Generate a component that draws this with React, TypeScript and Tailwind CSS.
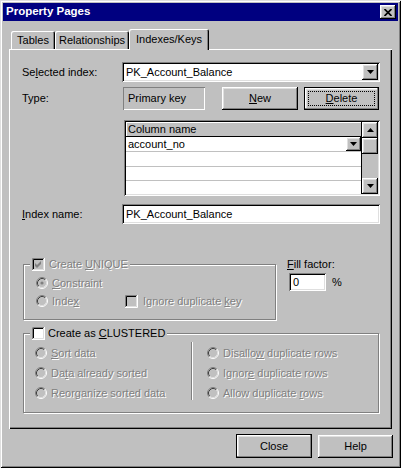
import React from "react";

const raised =
  "shadow-[inset_-1px_-1px_#000,inset_1px_1px_#fff,inset_-2px_-2px_#808080,inset_2px_2px_#dfdfdf]";
const raisedDefault =
  "border border-black shadow-[inset_-1px_-1px_#808080,inset_1px_1px_#fff,inset_2px_2px_#dfdfdf]";
const sunken =
  "shadow-[inset_1px_1px_#808080,inset_-1px_-1px_#fff,inset_2px_2px_#000,inset_-2px_-2px_#dfdfdf]";
const etched = "border border-[#808080] shadow-[inset_1px_1px_#fff,1px_1px_#fff]";
const dim = "text-[#808080] [text-shadow:1px_1px_0_#fff]";

const Arrow = ({ up = false }: { up?: boolean }) => (
  <svg width="7" height="4" viewBox="0 0 7 4">
    <polygon points={up ? "3.5,0 7,4 0,4" : "0,0 7,0 3.5,4"} fill="#000" />
  </svg>
);

const DropButton = ({ w = 16, h = 16 }: { w?: number; h?: number }) => (
  <div
    className={`${raised} bg-[#c0c0c0] flex items-center justify-center shrink-0`}
    style={{ width: w, height: h }}
  >
    <Arrow />
  </div>
);

const Radio = ({ checked = false }: { checked?: boolean }) => (
  <svg width="12" height="12" viewBox="0 0 12 12" className="shrink-0">
    <circle cx="6" cy="6" r="4.5" fill="#c0c0c0" />
    <path d="M2.11 9.89 A5.5 5.5 0 0 1 9.89 2.11" fill="none" stroke="#808080" />
    <path d="M9.89 2.11 A5.5 5.5 0 0 1 2.11 9.89" fill="none" stroke="#fff" />
    <path d="M2.82 9.18 A4.5 4.5 0 0 1 9.18 2.82" fill="none" stroke="#404040" />
    <path d="M9.18 2.82 A4.5 4.5 0 0 1 2.82 9.18" fill="none" stroke="#dfdfdf" />
    {checked && <circle cx="6" cy="6" r="1.6" fill="#808080" />}
  </svg>
);

const Check = ({ checked = false, disabled = false }: { checked?: boolean; disabled?: boolean }) => (
  <svg width="13" height="13" viewBox="0 0 13 13" className="shrink-0">
    <rect x="0" y="0" width="13" height="13" fill={disabled ? "#c0c0c0" : "#fff"} />
    <path d="M0.5 12 V0.5 H12" fill="none" stroke="#808080" />
    <path d="M1.5 11 V1.5 H11" fill="none" stroke="#000" />
    <path d="M0 12.5 H12.5 V0" fill="none" stroke="#fff" />
    <path d="M1 11.5 H11.5 V1" fill="none" stroke="#dfdfdf" />
    {checked && (
      <path d="M3 5 L5 7 L9 3 L9 6 L5 10 L3 8 Z" fill={disabled ? "#808080" : "#000"} />
    )}
  </svg>
);

const RadioRow = ({ children, checked }: { children: React.ReactNode; checked?: boolean }) => (
  <div className="h-[20px] flex items-center">
    <Radio checked={checked} />
    <span className={`ml-[4px] ${dim}`}>{children}</span>
  </div>
);

export default function App() {
  return (
    <div className="w-[401px] h-[468px] bg-[#c0c0c0] p-[3px] flex flex-col font-['Liberation_Sans',Arial,sans-serif] text-[11px] leading-none text-black shadow-[inset_1px_1px_#dfdfdf,inset_-1px_-1px_#000,inset_2px_2px_#fff,inset_-2px_-2px_#808080] select-none">
      {/* Title bar */}
      <div className="h-[18px] bg-[#000080] flex items-center justify-between pl-[3px] pr-[2px]">
        <span className="text-white font-bold text-[11.5px]">Property Pages</span>
        <div className={`${raised} w-[16px] h-[14px] bg-[#c0c0c0] flex items-center justify-center`}>
          <svg width="8" height="7" viewBox="0 0 8 7">
            <path d="M0.5 0 L7.5 7 M7.5 0 L0.5 7" stroke="#000" strokeWidth="1.7" />
          </svg>
        </div>
      </div>

      {/* Tabs + panel */}
      <div className="mt-[8px] pl-[6px]">
        <div className="relative z-10 flex items-start h-[21px] pl-[2px]">
          <div className="mt-[2px] h-[18px] w-[44px] flex items-center justify-center rounded-t-[2px] shadow-[inset_1px_1px_#fff,inset_-1px_0_#000,inset_-2px_0_#808080]">
            Tables
          </div>
          <div className="mt-[2px] h-[18px] w-[74px] flex items-center justify-center rounded-t-[2px] shadow-[inset_1px_1px_#fff,inset_-1px_0_#000,inset_-2px_0_#808080]">
            Relationships
          </div>
          <div className="h-[21px] w-[80px] bg-[#c0c0c0] flex items-center justify-center pb-[1px] rounded-t-[2px] shadow-[inset_1px_1px_#fff,inset_-1px_0_#000,inset_-2px_0_#808080]">
            Indexes/Keys
          </div>
        </div>

        <div className="w-[383px] h-[380px] -mt-[1px] pt-[13px] pl-[13px] flex flex-col shadow-[inset_1px_1px_#fff,inset_-1px_-1px_#000,inset_-2px_-2px_#808080]">
          {/* Selected index */}
          <div className="flex items-center h-[20px]">
            <span className="w-[100px]">
              Se<u>l</u>ected index:
            </span>
            <div className={`${sunken} bg-white w-[258px] h-[20px] p-[2px] flex items-center`}>
              <span className="flex-1 pl-[2px]">PK_Account_Balance</span>
              <DropButton />
            </div>
          </div>

          {/* Type + buttons */}
          <div className="flex items-center h-[23px] mt-[5px]">
            <span className="w-[101px]">Type:</span>
            <div className="w-[82px] h-[23px] flex items-center pl-[5px] shadow-[inset_1px_1px_#808080,inset_-1px_-1px_#fff]">
              Primary key
            </div>
            <div className={`${raised} ml-[17px] w-[76px] h-[23px] flex items-center justify-center`}>
              <span>
                <u>N</u>ew
              </span>
            </div>
            <div className={`${raisedDefault} ml-[6px] w-[75px] h-[23px] flex`}>
              <div className="flex-1 m-[3px] border border-dotted border-black flex items-center justify-center">
                <span>
                  <u>D</u>elete
                </span>
              </div>
            </div>
          </div>

          {/* Column grid */}
          <div className={`${sunken} ml-[102px] mt-[10px] w-[256px] h-[76px] p-[2px] bg-[#c0c0c0] flex`}>
            <div className="flex-1 flex flex-col bg-white border-r border-black">
              <div className="h-[15px] bg-[#c0c0c0] border-b border-black flex items-center pl-[2px] shadow-[inset_1px_1px_#fff]">
                Column name
              </div>
              <div className="h-[15px] border-b border-[#c0c0c0] flex items-center justify-between pl-[2px]">
                <span>account_no</span>
                <DropButton w={15} h={14} />
              </div>
              <div className="h-[15px] border-b border-[#c0c0c0]" />
              <div className="h-[14px] border-b border-[#c0c0c0]" />
              <div className="flex-1" />
            </div>
            <div className="w-[16px] flex flex-col">
              <div className={`${raised} h-[16px] bg-[#c0c0c0] flex items-center justify-center`}>
                <Arrow up />
              </div>
              <div className={`${raised} h-[16px] bg-[#c0c0c0]`} />
              <div className="flex-1" />
              <div className={`${raised} h-[16px] bg-[#c0c0c0] flex items-center justify-center`}>
                <Arrow />
              </div>
            </div>
          </div>

          {/* Index name */}
          <div className="flex items-center h-[20px] mt-[8px]">
            <span className="w-[100px]">
              <u>I</u>ndex name:
            </span>
            <div className={`${sunken} bg-white w-[258px] h-[20px] p-[2px] flex items-center`}>
              <span className="pl-[2px]">PK_Account_Balance</span>
            </div>
          </div>

          {/* Create UNIQUE + fill factor */}
          <div className="flex items-start mt-[33px]">
            <div className="relative ml-[1px] w-[253px] pt-[7px]">
              <div className={`${etched} h-[56px] pl-[12px] pt-[9px]`}>
                <div className="h-[18px] flex items-center">
                  <Radio checked />
                  <span className={`ml-[4px] ${dim}`}>
                    <u>C</u>onstraint
                  </span>
                </div>
                <div className="h-[18px] flex items-center">
                  <div className="w-[89px] flex items-center">
                    <Radio />
                    <span className={`ml-[4px] ${dim}`}>
                      Inde<u>x</u>
                    </span>
                  </div>
                  <Check disabled />
                  <span className={`ml-[5px] ${dim}`}>
                    Ignore duplicate <u>k</u>ey
                  </span>
                </div>
              </div>
              <div className="absolute top-0 left-[7px] h-[14px] px-[2px] bg-[#c0c0c0] flex items-center">
                <Check checked disabled />
                <span className={`ml-[4px] ${dim}`}>
                  Create <u>U</u>NIQUE
                </span>
              </div>
            </div>

            <div className="ml-[11px] flex flex-col">
              <span className="h-[14px] flex items-center">
                <u>F</u>ill factor:
              </span>
              <div className="flex items-center mt-[2px] ml-[2px]">
                <div className={`${sunken} bg-white w-[37px] h-[18px] flex items-center pl-[4px]`}>0</div>
                <span className="ml-[6px]">%</span>
              </div>
            </div>
          </div>

          {/* Create as CLUSTERED */}
          <div className="relative ml-[1px] w-[356px] pt-[7px] mt-[6px]">
            <div className={`${etched} h-[80px] pt-[9px] pl-[11px] flex items-start`}>
              <div className="w-[156px] flex flex-col">
                <RadioRow>
                  <u>S</u>ort data
                </RadioRow>
                <RadioRow>
                  Da<u>t</u>a already sorted
                </RadioRow>
                <RadioRow>
                  Reor<u>g</u>anize sorted data
                </RadioRow>
              </div>
              <div className="w-[2px] h-[58px] -mt-[1px] border-l border-[#808080] bg-white" />
              <div className="ml-[14px] flex flex-col">
                <RadioRow>
                  Disallo<u>w</u> duplicate rows
                </RadioRow>
                <RadioRow>
                  Ignor<u>e</u> duplicate rows
                </RadioRow>
                <RadioRow>
                  Allow duplicate <u>r</u>ows
                </RadioRow>
              </div>
            </div>
            <div className="absolute top-0 left-[7px] h-[14px] px-[2px] bg-[#c0c0c0] flex items-center">
              <Check />
              <span className="ml-[3px]">
                Create as <u>C</u>LUSTERED
              </span>
            </div>
          </div>
        </div>
      </div>

      {/* Dialog buttons */}
      <div className="flex justify-end gap-[6px] mt-[5px] pr-[5px]">
        <div className={`${raisedDefault} w-[76px] h-[24px] flex items-center justify-center`}>Close</div>
        <div className={`${raised} w-[75px] h-[23px] mt-[1px] flex items-center justify-center`}>Help</div>
      </div>
    </div>
  );
}
